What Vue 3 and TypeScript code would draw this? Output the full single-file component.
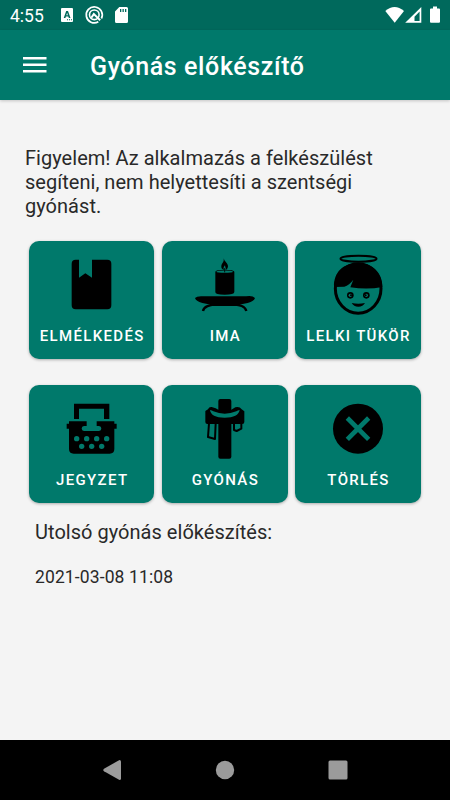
<script setup lang="ts">
interface Tile {
  id: string
  label: string
  viewBox: string
}

const tiles: Tile[] = [
  { id: 'meditation', label: 'ELMÉLKEDÉS', viewBox: '119 62 192 192' },
  { id: 'prayer', label: 'IMA', viewBox: '113 62 192 192' },
  { id: 'mirror', label: 'LELKI TÜKÖR', viewBox: '114 62 192 192' },
  { id: 'notes', label: 'JEGYZET', viewBox: '119 57 192 192' },
  { id: 'confession', label: 'GYÓNÁS', viewBox: '113 57 192 192' },
  { id: 'delete', label: 'TÖRLÉS', viewBox: '114 57 192 192' },
]
</script>

<template>
  <div class="screen">
    <header class="status">
      <span class="clock">4:55</span>
      <svg class="status-left" viewBox="0 0 75 20">
        <path fill="#fff" fill-rule="evenodd" d="M2 3h10q1 0 1 1v12q0 1-1 1H2q-1 0-1-1V4q0-1 1-1zM6.2 6L3.7 13h1.7l.5-1.5h2.4l.5 1.5h1.7L8 6zM7.1 7.7l.8 2.5H6.3zM7 14.2v1h1v-1zm2 0v1h1v-1zm2 0v1h1v-1z" />
        <g fill="none" stroke="#fff">
          <path stroke-width="1.7" d="M38.3 16.8A8 8 0 1 1 41.4 13.5" />
          <circle cx="34.3" cy="9.8" r="4.8" stroke-width="1.6" />
          <path stroke-width="2" d="M31.3 12.7L33.8 9.1L40.2 15.2" />
        </g>
        <path fill="#fff" fill-rule="evenodd" d="M59.3 2h7.2q1.5 0 1.5 1.5v13q0 1.5-1.5 1.5h-10Q55 18 55 16.500V6.500zM60 4v3h1.300V4zm2.500 0v3h1.300V4zm2.500 0v3h1.300V4z" />
      </svg>
      <svg class="status-right" viewBox="0 0 60 20">
        <path fill="#fff" d="M.3 6Q9.500-1.800 19 6L9.700 17.700z" />
        <path fill="#fff" fill-rule="evenodd" d="M36.300 2v15.800H20.200zM34.600 6.500L29.500 11.700V16h5.100z" />
        <path fill="#fff" d="M48 1.500h4v2h2q1 0 1 1v12.200q0 1-1 1h-8q-1 0-1-1V4.500q0-1 1-1h2z" />
      </svg>
    </header>

    <div class="toolbar">
      <svg class="menu" viewBox="0 0 24 16">
        <path fill="#fff" d="M0 0h23.500v2.500H0zM0 6.500h23.500V9H0zM0 13h23.500v2.500H0z" />
      </svg>
      <h1>Gyónás előkészítő</h1>
    </div>

    <main>
      <p class="notice">Figyelem! Az alkalmazás a felkészülést segíteni, nem helyettesíti a szentségi gyónást.</p>

      <div class="grid">
        <button v-for="tile in tiles" :key="tile.id" class="tile" type="button">
          <svg class="icon" :viewBox="tile.viewBox">
            <path v-if="tile.id === 'meditation'" d="M166 82H176V136L195 123L215 136V82H261Q273 82 273 94V219Q273 231 261 231H166Q154 231 154 219V94Q154 82 166 82Z" />

            <g v-else-if="tile.id === 'prayer'">
              <path fill-rule="evenodd" d="M205 78C208 89 218 93 218 102C218 108 214 112 211 113C213 108 209 105 209 99C204 104 204 109 206 113C200 111 197 107 198 101C199 92 207 90 205 78Z" />
              <path d="M180 118Q180 112 208 112T237 118V179Q237 187 208 187T180 179Z" />
              <ellipse class="cut" cx="208" cy="118" rx="25" ry="3.500" />
              <path class="line" stroke-width="2.500" d="M208 107V120" />
              <path d="M119 197Q125 190 145 192H272Q292 189 299 197Q297 206 277 212L247 218H171L141 212Q121 206 119 197Z" />
              <path class="line" stroke-width="7" d="M183 215C165 218 145 221 143 236M234 215C252 218 270 221 273 236" />
              <path d="M160 213H258L244 221H174Z" />
            </g>

            <g v-else-if="tile.id === 'mirror'">
              <ellipse class="line" cx="211.500" cy="79" rx="54" ry="9" stroke-width="6" />
              <ellipse class="line" cx="210.500" cy="168.500" rx="68.500" ry="74" stroke-width="9" />
              <path d="M138 164C137 119 165 93 210 92C254 93 284 121 283 164Q239 173 187 165L196 142Q184 158 169 163Z" />
              <circle cx="187" cy="189" r="10" />
              <circle cx="235" cy="189" r="10" />
              <circle class="cut" cx="187" cy="189" r="5" />
              <circle class="cut" cx="235" cy="189" r="5" />
              <circle cx="189" cy="189" r="3" />
              <circle cx="233" cy="189" r="3" />
              <path d="M191 212Q211 216 231 212Q225 223 211 223T191 212Z" />
            </g>

            <g v-else-if="tile.id === 'notes'">
              <path d="M161 77H267V123H251V92H176V123H161Z" />
              <path d="M146 130H199V144H191Q184 145 184 151.500T191 159H236Q243 158 243 151.500T236 144H229V130H282V137H289V152H282V213Q282 227 268 227H160Q146 227 146 213V152H139V137H146Z" />
              <g class="cut">
                <circle cx="169" cy="182" r="8" /><circle cx="199" cy="182" r="8" />
                <circle cx="229" cy="182" r="8" /><circle cx="259" cy="182" r="8" />
                <circle cx="184" cy="205" r="8" /><circle cx="214" cy="205" r="8" />
                <circle cx="244" cy="205" r="8" />
              </g>
            </g>

            <g v-else-if="tile.id === 'confession'">
              <rect x="189" y="63" width="39" height="179" rx="6" />
              <path d="M150 99L158 94Q161 86 169 87L181 91L189 95H228L240 88Q253 85 259 94L267 100V132Q267 138 261 138H156Q150 138 150 132Z" />
              <path class="cut" d="M164 96Q170 97 174 100Q208 114 243 100Q247 97 253 96Q249 119 208 119T164 96Z" />
              <path class="line" stroke-width="6" stroke-linejoin="round" d="M161 136L158 177L179 183L181 136M236 136V156L244 159L258 152V136" />
            </g>

            <g v-else>
              <circle cx="210" cy="152" r="75" />
              <path fill="none" stroke="#00796b" stroke-width="14" d="M178 120L242 184M242 120L178 184" />
            </g>
          </svg>
          <span class="label">{{ tile.label }}</span>
        </button>
      </div>

      <p class="last-title">Utolsó gyónás előkészítés:</p>
      <p class="last-date">2021-03-08 11:08</p>
    </main>

    <nav class="navbar">
      <svg viewBox="0 0 20 20"><path d="M17.500 0Q19 0 19 1.500V18.500Q19 20 17.500 20L2 11.300Q.5 10 2 8.700Z" /></svg>
      <svg viewBox="0 0 20 20"><circle cx="10" cy="10" r="9.200" /></svg>
      <svg viewBox="0 0 20 20"><rect x=".5" y=".5" width="19" height="19" rx="1.500" /></svg>
    </nav>
  </div>
</template>

<style>
body {
  margin: 0;
}
</style>

<style scoped>
.screen {
  width: 450px;
  height: 800px;
  display: flex;
  flex-direction: column;
  overflow: hidden;
  background: #f4f4f4;
  color: #292929;
  font-family: Roboto, sans-serif;
}
p, h1 {
  margin: 0;
}
.status {
  flex: none;
  height: 30px;
  box-sizing: border-box;
  padding: 0 7px 0 10px;
  display: flex;
  align-items: center;
  background: #00695c;
  color: #fff;
}
.clock {
  width: 50px;
  font-size: 17.5px;
  line-height: 30px;
  padding-top: 2px;
}
.status-left {
  width: 75px;
  height: 20px;
}
.status-right {
  width: 60px;
  height: 20px;
  margin: 0 -2px 0 auto;
}
.toolbar {
  flex: none;
  height: 70px;
  box-sizing: border-box;
  padding-left: 23px;
  display: flex;
  align-items: center;
  background: #00796b;
  color: #fff;
  box-shadow: 0 1px 3px rgba(0, 0, 0, 0.2);
}
.menu {
  width: 24px;
  height: 16px;
}
h1 {
  margin: 3px 0 0 43px;
  font-size: 25px;
  font-weight: 500;
  line-height: 30px;
  letter-spacing: 0.62px;
  white-space: nowrap;
}
main {
  flex: 1;
  padding: 46px 25px 0;
}
.notice {
  width: 375px;
  height: 72px;
  font-size: 20px;
  font-weight: 400;
  line-height: 24px;
  letter-spacing: 0.03px;
}
.grid {
  display: grid;
  grid-template-columns: repeat(3, 125.4px);
  grid-auto-rows: 118px;
  column-gap: 7.800px;
  row-gap: 26.500px;
  margin: 22.600px 0 0 4px;
}
.tile {
  display: flex;
  flex-direction: column;
  align-items: center;
  padding: 12px 0 0;
  border: 0;
  border-radius: 10px;
  background: #00796b;
  box-shadow: 0 1px 3px rgba(0, 0, 0, 0.3);
  color: #fff;
  font-family: inherit;
}
.icon {
  flex: none;
  width: 64px;
  height: 64px;
}
.line {
  fill: none;
  stroke: #000;
}
.cut {
  fill: #00796b;
}
.label {
  margin-top: 9px;
  padding-left: 1px;
  font-size: 15px;
  font-weight: 500;
  line-height: 20px;
  letter-spacing: 1.34px;
  white-space: nowrap;
}
.last-title {
  margin: 16.500px 0 0 10px;
  font-size: 20px;
  font-weight: 400;
  line-height: 24px;
  letter-spacing: 0.03px;
}
.last-date {
  margin: 23px 0 0 10px;
  font-size: 17.5px;
  font-weight: 400;
  line-height: 20px;
  letter-spacing: 0.12px;
}
.navbar {
  flex: none;
  height: 60px;
  box-sizing: border-box;
  padding: 0 102px;
  display: flex;
  align-items: center;
  justify-content: space-between;
  background: #000;
}
.navbar svg {
  width: 20px;
  height: 20px;
  fill: #9b9b9b;
}
</style>
